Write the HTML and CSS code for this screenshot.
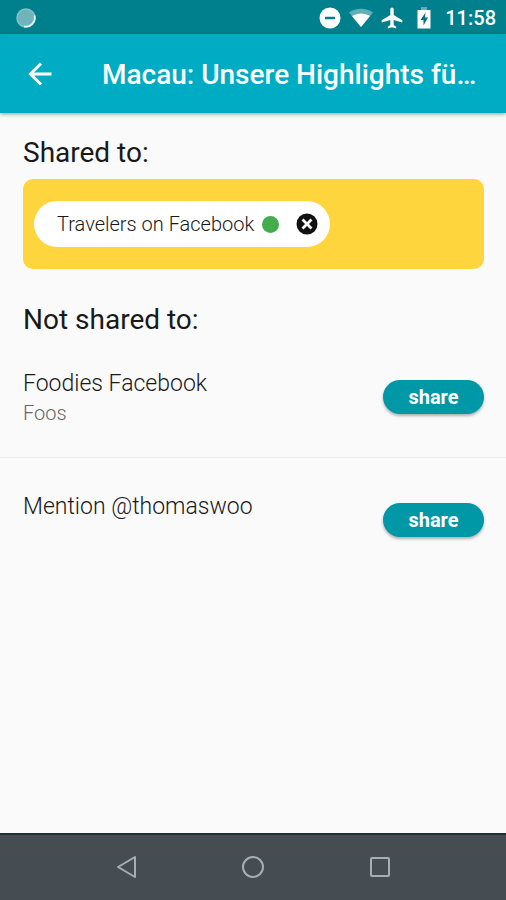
FILE: index.html
```html
<!DOCTYPE html>
<html lang="de">
<head>
<meta charset="utf-8">
<meta name="viewport" content="width=device-width, initial-scale=1">
<title>Macau: Unsere Highlights</title>
<link rel="stylesheet" href="styles.css">
</head>
<body>
<div class="status-bar">
  <svg class="status-sync" width="22" height="22" viewBox="0 0 22 22" aria-hidden="true">
    <circle cx="11" cy="11" r="9" fill="#6fb3bb"/>
    <circle cx="11" cy="11" r="9" fill="none" stroke="#86c0c6" stroke-width="1.5"/>
    <path d="M19.500 8.500A9 9 0 0 1 9 19.500" fill="none" stroke="#e4f5f6" stroke-width="1.800"/>
  </svg>
  <div class="status-icons">
    <svg width="22" height="22" viewBox="0 0 22 22" aria-hidden="true"><circle cx="11" cy="11" r="10.500" fill="#fff"/><path d="M6 11h10" stroke="#00808c" stroke-width="2.500"/></svg>
    <svg width="24" height="20" viewBox="0 0 24 20" aria-hidden="true"><path d="M0 4.500C7 -.5 17 -.5 24 4.500L12 19z" fill="#5fb0b8"/><path d="M3 8C8 4.500 16 4.500 21 8L12 19z" fill="#fff"/></svg>
    <svg class="icon-plane" width="22" height="22" viewBox="0 0 22 22" aria-hidden="true"><path d="M12.700 8V2.200a1.700 1.700 0 0 0-3.400 0V8L.7 13.300v2.300l8.600-2.700v5l-2.500 1.900V21.500L11 20.300l4.200 1.200v-1.700l-2.500-1.900v-5l8.600 2.700v-2.300z" fill="#fff"/></svg>
    <svg width="14" height="22" viewBox="0 0 14 22" aria-hidden="true"><path d="M4 0h6v3H4z" fill="#5fb0b8"/><path d="M.5 3h13v18.500H.5z" fill="#fff"/><path d="M8.500 5.500L3.500 13h3v5.500l4.500-8H8z" fill="#00727d"/></svg>
  </div>
  <time class="clock">11:58</time>
</div>
<header class="app-bar">
  <button class="back" type="button" aria-label="Zurück">
    <svg width="24" height="24" viewBox="0 0 24 24" fill="none" stroke="#fff" stroke-width="3" aria-hidden="true"><path d="M23.500 12H3M13 1.500L2.500 12 13 22.500"/></svg>
  </button>
  <h1 class="title">Macau: Unsere Highlights fü…</h1>
</header>
<main class="content">
  <section class="shared">
    <h2 class="heading">Shared to:</h2>
    <div class="shared-box">
      <div class="chip">
        <span>Travelers on Facebook</span>
        <span class="dot"></span>
        <button class="remove" type="button" aria-label="Remove">
          <svg width="22" height="22" viewBox="0 0 22 22" aria-hidden="true"><circle cx="11" cy="11" r="10.500" fill="#111"/><path d="M6.500 6.500l9 9M15.500 6.500l-9 9" stroke="#fff" stroke-width="2.800"/></svg>
        </button>
      </div>
    </div>
  </section>
  <section class="unshared">
    <h2 class="heading">Not shared to:</h2>
    <ul class="list">
      <li class="item">
        <div>
          <div class="name">Foodies Facebook</div>
          <div class="detail">Foos</div>
        </div>
        <button class="share" type="button">share</button>
      </li>
      <li class="item">
        <div>
          <div class="name">Mention @thomaswoo</div>
        </div>
        <button class="share" type="button">share</button>
      </li>
    </ul>
  </section>
</main>
<nav class="nav-bar">
  <button type="button" aria-label="Back"><svg width="22" height="24" viewBox="0 0 22 24" fill="none" stroke="#a9aeb1" stroke-width="2" stroke-linejoin="round" aria-hidden="true"><path d="M20 2v20L3 12z"/></svg></button>
  <button type="button" aria-label="Home"><svg width="22" height="24" viewBox="0 0 22 24" fill="none" stroke="#a9aeb1" stroke-width="2" aria-hidden="true"><circle cx="11" cy="12" r="10"/></svg></button>
  <button type="button" aria-label="Recents"><svg width="22" height="24" viewBox="0 0 22 24" fill="none" stroke="#a9aeb1" stroke-width="2" aria-hidden="true"><rect x="2" y="3" width="18" height="18" rx="1"/></svg></button>
</nav>
</body>
</html>
```
FILE: styles.css
```css
* {
  box-sizing: border-box;
}

body {
  margin: 0;
  min-height: 100vh;
  display: flex;
  flex-direction: column;
  background: #fafafa;
  color: #191919;
  font-family: Roboto, "Liberation Sans", sans-serif;
}

button {
  border: 0;
  padding: 0;
  background: none;
  font-family: inherit;
}

svg {
  display: block;
}

.status-bar {
  display: flex;
  align-items: center;
  height: 34px;
  padding: 1px 10px 0 15px;
  background: #00808c;
  color: #fff;
}

.status-icons {
  display: flex;
  align-items: center;
  gap: 8px;
  margin-left: auto;
}

.icon-plane {
  margin-right: 6px;
}

.clock {
  margin-left: 14px;
  font-size: 20px;
  line-height: 24px;
  font-weight: 500;
}

.app-bar {
  display: flex;
  align-items: center;
  gap: 50px;
  height: 79px;
  padding: 0 24px 0 28px;
  background: #00acc4;
  box-shadow: 0 1px 4px rgba(0, 0, 0, 0.4);
}

.title {
  min-width: 0;
  margin: 0;
  padding-top: 2px;
  overflow: hidden;
  color: #fff;
  font-size: 28px;
  line-height: 36px;
  font-weight: 500;
  text-overflow: ellipsis;
  white-space: nowrap;
}

.content {
  flex: 1;
}

.shared {
  padding: 21px 22px 0 23px;
}

.unshared {
  padding-top: 32px;
}

.heading {
  margin: 0;
  font-size: 28px;
  line-height: 38px;
  font-weight: 400;
}

.unshared .heading {
  padding: 0 22px 0 23px;
}

.shared-box {
  display: flex;
  margin-top: 7px;
  padding: 22px 11px;
  border-radius: 10px;
  background: #ffd53d;
}

.chip {
  display: flex;
  align-items: center;
  height: 46px;
  padding: 0 12px 0 23px;
  border-radius: 23px;
  background: #fff;
  font-size: 20px;
  line-height: 24px;
  font-weight: 300;
}

.dot {
  width: 17px;
  height: 17px;
  margin: 0 17px 0 8px;
  border-radius: 50%;
  background: #43ac4b;
}

.list {
  margin: 0;
  padding: 0;
  list-style: none;
}

.item {
  display: flex;
  justify-content: space-between;
  align-items: flex-start;
  padding: 34px 22px 30px 23px;
}

.item:first-child {
  padding-top: 30px;
}

.item + .item {
  border-top: 1px solid #eee;
}

.name {
  font-size: 23px;
  line-height: 30px;
  font-weight: 300;
}

.detail {
  color: #666;
  font-size: 20px;
  line-height: 28px;
  font-weight: 300;
}

.share {
  width: 101px;
  height: 34px;
  margin-top: 11px;
  border-radius: 17px;
  background: #0097a7;
  box-shadow: 0 2px 3px rgba(0, 0, 0, 0.3);
  color: #fff;
  font-size: 20px;
  line-height: 24px;
  font-weight: 700;
}

.nav-bar {
  display: flex;
  justify-content: center;
  gap: 105px;
  height: 67px;
  padding-top: 20px;
  border-top: 2px solid #1b3030;
  background: #464d52;
}

.nav-bar button {
  height: 24px;
}
```
